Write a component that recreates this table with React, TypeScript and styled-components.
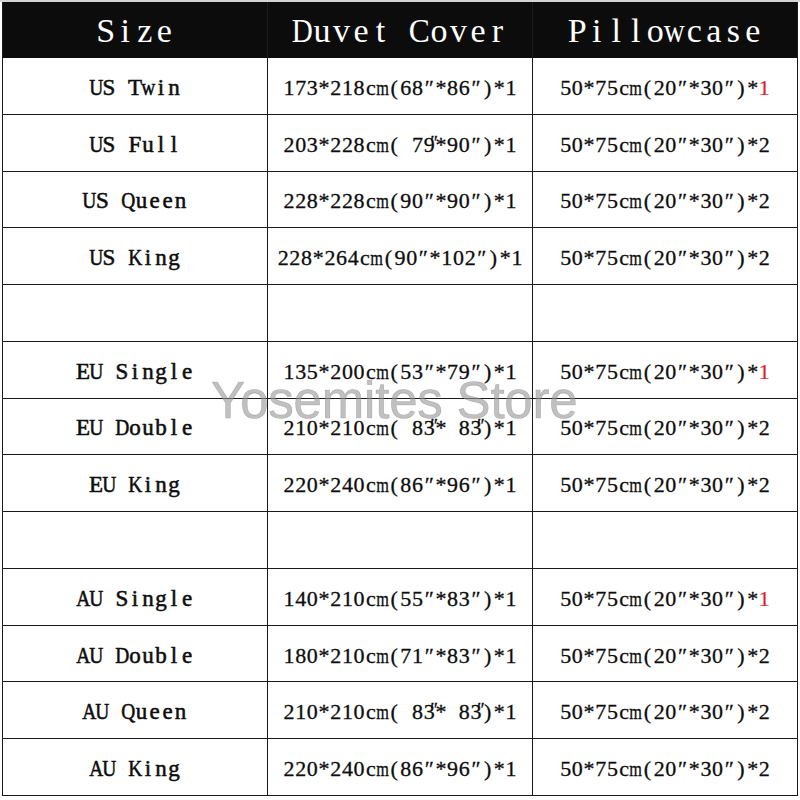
import React from "react";
import styled, { createGlobalStyle } from "styled-components";

const Global = createGlobalStyle`
  html, body { margin: 0; padding: 0; background: #ffffff; }
  body { width: 800px; height: 800px; overflow: hidden; }
`;

const Page = styled.div`
  position: relative;
  width: 800px;
  height: 800px;
  background: #ffffff;
  border-top: 2px solid #d4d4d4;
  box-sizing: border-box;
  padding-left: 2px;
`;

const Table = styled.div`
  display: grid;
  grid-template-columns: 265px 265px 265px;
  grid-template-rows: 56px repeat(13, 56.77px);
  width: 795px;
  border-left: 1.5px solid #1a1a1a;
  box-sizing: border-box;
`;

const HeadCell = styled.div`
  background: #0c0c0c;
  color: #ffffff;
  display: flex;
  align-items: center;
  justify-content: center;
  font-family: "Liberation Serif", "Times New Roman", serif;
  font-size: 34px;
  padding-top: 1px;
  box-sizing: border-box;
  border-right: 1px solid #1c1c1c;
`;

const Cell = styled.div<{ $label?: boolean }>`
  display: flex;
  align-items: center;
  justify-content: center;
  border-right: 1.5px solid #1a1a1a;
  border-bottom: 1.5px solid #1a1a1a;
  box-sizing: border-box;
  color: #0d0d0d;
  font-family: "Liberation Serif", "Times New Roman", serif;
  font-size: ${(p) => (p.$label ? "23px" : "22px")};
  -webkit-text-stroke: ${(p) => (p.$label ? "0.55px #0d0d0d" : "0.3px #0d0d0d")};
  padding-top: 4px;
  white-space: nowrap;
`;

const Glyph = styled.span<{ $w: number; $red?: boolean; $prime?: boolean }>`
  position: relative;
  display: inline-flex;
  justify-content: center;
  width: ${(p) => p.$w}px;
  color: ${(p) => (p.$red ? "#e0202a" : "inherit")};
  -webkit-text-stroke: ${(p) => (p.$red ? "0.2px #e0202a" : "inherit")};
  ${(p) =>
    p.$prime
      ? `
    &::after {
      content: "″";
      position: absolute;
      right: -3px;
      top: 0;
      font-size: 0.85em;
    }
  `
      : ""}
`;

const Ink = styled.span`
  display: inline-block;
  transform-origin: center;
`;

const Watermark = styled.div`
  position: absolute;
  left: 211px;
  top: 369px;
  font-family: "Liberation Sans", Arial, sans-serif;
  font-size: 51px;
  color: rgba(150, 150, 150, 0.6);
  -webkit-text-stroke: 0.6px rgba(125, 125, 125, 0.45);
  letter-spacing: -0.2px;
  pointer-events: none;
  white-space: nowrap;
`;

// advance widths (em) of the wide Times glyphs, used to condense them into a half-width cell
const ADV: Record<string, number> = {
  m: 0.778, w: 0.722, M: 0.889, D: 0.722, Q: 0.722, C: 0.667, U: 0.722,
  K: 0.722, A: 0.722, G: 0.722, E: 0.611, T: 0.611, S: 0.556, P: 0.556, F: 0.556,
};

// "§" after a digit marks a double prime drawn over that digit's top-right corner
function Mono({ text, w, size, redLast }: { text: string; w: number; size: number; redLast?: boolean }) {
  const chars = text.split("");
  const out: React.ReactNode[] = [];
  chars.forEach((c, i) => {
    if (c === "§") return;
    const prime = chars[i + 1] === "§";
    const adv = ADV[c];
    const scale = adv ? Math.min(1, (w * 1.08) / (adv * size)) : 1;
    out.push(
      <Glyph key={i} $w={w} $prime={prime} $red={redLast && i === chars.length - 1}>
        <Ink style={scale < 1 ? { transform: `scaleX(${scale.toFixed(3)})` } : undefined}>
          {c === " " ? "\u00a0" : c}
        </Ink>
      </Glyph>
    );
  });
  return <>{out}</>;
}

type Row = { label: string; duvet: string; red: boolean } | null;

const rows: Row[] = [
  { label: "US Twin", duvet: "173*218cm(68″*86″)*1", red: true },
  { label: "US Full", duvet: "203*228cm( 79§*90″)*1", red: false },
  { label: "US Queen", duvet: "228*228cm(90″*90″)*1", red: false },
  { label: "US King", duvet: "228*264cm(90″*102″)*1", red: false },
  null,
  { label: "EU Single", duvet: "135*200cm(53″*79″)*1", red: true },
  { label: "EU Double", duvet: "210*210cm( 83§* 83§)*1", red: false },
  { label: "EU King", duvet: "220*240cm(86″*96″)*1", red: false },
  null,
  { label: "AU Single", duvet: "140*210cm(55″*83″)*1", red: true },
  { label: "AU Double", duvet: "180*210cm(71″*83″)*1", red: false },
  { label: "AU Queen", duvet: "210*210cm( 83§* 83§)*1", red: false },
  { label: "AU King", duvet: "220*240cm(86″*96″)*1", red: false },
];

export default function App() {
  return (
    <Page>
      <Global />
      <Table>
        <HeadCell>
          <Mono text="Size" w={19.5} size={34} />
        </HeadCell>
        <HeadCell>
          <Mono text="Duvet Cover" w={19.5} size={34} />
        </HeadCell>
        <HeadCell>
          <Mono text="Pillowcase" w={19.5} size={34} />
        </HeadCell>
        {rows.map((r, i) =>
          r ? (
            <React.Fragment key={i}>
              <Cell $label>
                <Mono text={r.label} w={13} size={23} />
              </Cell>
              <Cell>
                <Mono text={r.duvet} w={11.7} size={22} />
              </Cell>
              <Cell>
                <Mono
                  text={r.red ? "50*75cm(20″*30″)*1" : "50*75cm(20″*30″)*2"}
                  w={11.7}
                  size={22}
                  redLast={r.red}
                />
              </Cell>
            </React.Fragment>
          ) : (
            <React.Fragment key={i}>
              <Cell $label />
              <Cell />
              <Cell />
            </React.Fragment>
          )
        )}
      </Table>
      <Watermark>Yosemites Store</Watermark>
    </Page>
  );
}
